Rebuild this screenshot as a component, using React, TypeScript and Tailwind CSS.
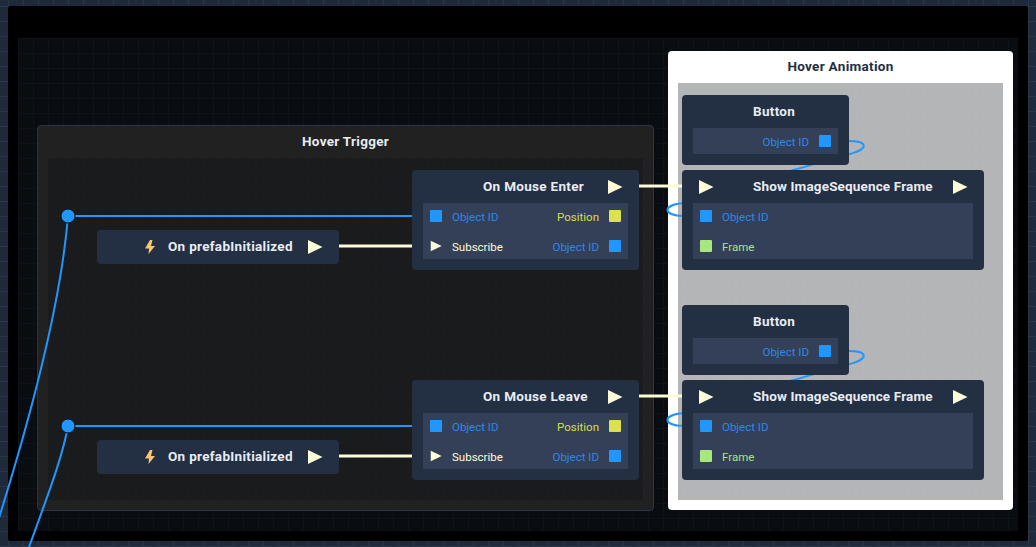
const title = "text-[13.5px] font-bold tracking-[0.3px] text-[#e8ecf2]";
const row = "flex items-center gap-[10px]";
const rowEnd = "flex items-center justify-end gap-[10px]";

function Play({ className }: { className: string }) {
  return (
    <svg viewBox="0 0 16 16" className={className}>
      <path d="M1 1 L15.5 8 L1 15 Z" fill="#fdfbd8" />
    </svg>
  );
}

function Port({ color }: { color: string }) {
  return <span className={`block w-3 h-3 rounded-[1px] ${color}`} />;
}

function Label({ children }: { children: string }) {
  return <span className="translate-y-[2px]">{children}</span>;
}

function Bolt() {
  return (
    <svg viewBox="0 0 12 14" className="w-3 h-3.5">
      <path d="M6 0 L1 8.5 H5 L4.5 14 L11 6 H7 L8.5 0 Z" fill="#fbc66d" />
    </svg>
  );
}

function MouseNode({ top, name }: { top: string; name: string }) {
  return (
    <div className={`absolute left-[412px] w-[227px] h-[100px] rounded-[4px] bg-[#232f42] ${top}`}>
      <div className="h-[33px] flex items-center">
        <span className={`ml-[71px] ${title}`}>{name}</span>
        <Play className="w-4 h-4 ml-auto mr-[16px]" />
      </div>
      <div className="mx-[11px] h-[56px] bg-[#344057] px-[7px]">
        <div className="grid grid-cols-2 auto-rows-[30px] items-center -translate-y-[2px] text-[11.5px]">
          <div className={`${row} text-[#2b88ea]`}><Port color="bg-[#2196fe]" /><Label>Object ID</Label></div>
          <div className={`${rowEnd} text-[#d8df4e]`}><Label>Position</Label><Port color="bg-[#dbe24e]" /></div>
          <div className={`${row} text-[#fdfbd8]`}><Play className="w-3 h-3" /><Label>Subscribe</Label></div>
          <div className={`${rowEnd} text-[#2b88ea]`}><Label>Object ID</Label><Port color="bg-[#2196fe]" /></div>
        </div>
      </div>
    </div>
  );
}

function PrefabNode({ top }: { top: string }) {
  return (
    <div className={`absolute left-[97px] w-[242px] h-[34px] rounded-[4px] bg-[#232f42] flex items-center ${top}`}>
      <div className="ml-[47px] w-3 flex"><Bolt /></div>
      <span className={`ml-[12px] -translate-y-[1px] ${title}`}>On prefabInitialized</span>
      <Play className="w-4 h-4 ml-auto mr-[16px]" />
    </div>
  );
}

function ButtonNode({ top }: { top: string }) {
  return (
    <div className={`absolute left-[682px] w-[167px] h-[70px] rounded-[4px] bg-[#232f42] ${top}`}>
      <div className="h-[33px] flex items-center">
        <span className={`ml-[71px] ${title}`}>Button</span>
      </div>
      <div className={`mx-[11px] h-[26px] bg-[#344057] pr-[7px] text-[11.5px] text-[#2b88ea] ${rowEnd}`}>
        <Label>Object ID</Label><Port color="bg-[#2196fe]" />
      </div>
    </div>
  );
}

function ShowNode({ top }: { top: string }) {
  return (
    <div className={`absolute left-[682px] w-[302px] h-[100px] rounded-[4px] bg-[#232f42] ${top}`}>
      <div className="h-[33px] flex items-center">
        <Play className="w-4 h-4 ml-[16px]" />
        <span className="ml-[39px] text-[13.5px] font-bold tracking-[0.15px] text-[#e8ecf2]">Show ImageSequence Frame</span>
        <Play className="w-4 h-4 ml-auto mr-[16px]" />
      </div>
      <div className="mx-[11px] h-[56px] bg-[#344057] px-[7px]">
        <div className="grid auto-rows-[30px] items-center -translate-y-[2px] text-[11.5px]">
          <div className={`${row} text-[#2b88ea]`}><Port color="bg-[#2196fe]" /><Label>Object ID</Label></div>
          <div className={`${row} text-[#a8e67e]`}><Port color="bg-[#a8e67e]" /><Label>Frame</Label></div>
        </div>
      </div>
    </div>
  );
}

// wires sit between the group panels and the nodes
function Wires() {
  const dy = [0, 210];
  return (
    <svg width="1036" height="547" className="absolute left-0 top-0" fill="none">
      <path d="M68 216 C 62 290 40 390 -8 540" stroke="#2196fe" strokeWidth="2" />
      <path d="M68 426 C 62 460 44 505 28 550" stroke="#2196fe" strokeWidth="2" />
      {dy.map((d) => (
        <g key={d} transform={`translate(0 ${d})`}>
          <path d="M68 216 H414" stroke="#2196fe" strokeWidth="2" />
          <path d="M339 246 H414" stroke="#fdfbd8" strokeWidth="3" />
          <path d="M637 186 H684" stroke="#fdfbd8" strokeWidth="3" />
          <path d="M684 203 C 662 205 662 215 684 216" stroke="#2196fe" strokeWidth="2" />
          <path d="M845 141 C 870 140 870 150 845 155 C 830 159 812 165 790 171" stroke="#2196fe" strokeWidth="2" />
        </g>
      ))}
      <circle cx="68" cy="216" r="7" fill="#2196fe" stroke="#0d1117" strokeWidth="1" />
      <circle cx="68" cy="426" r="7" fill="#2196fe" stroke="#0d1117" strokeWidth="1" />
    </svg>
  );
}

export default function App() {
  return (
    <div className="relative w-[1036px] h-[547px] overflow-hidden bg-[#1e2939] bg-[linear-gradient(#2b3648_1px,transparent_1px),linear-gradient(90deg,#2b3648_1px,transparent_1px)] bg-[size:15px_15px] bg-[position:8px_6px] font-['Roboto',sans-serif]">
      {/* black frame and inner canvas */}
      <div className="absolute left-[8px] top-[6px] w-[1020px] h-[535px] rounded-[2px] bg-black pl-[10px] pr-[10px] pt-[32px] pb-[10px]">
        <div className="w-full h-full bg-[#090c11] bg-[linear-gradient(#0e1319_1px,transparent_1px),linear-gradient(90deg,#0e1319_1px,transparent_1px)] bg-[size:15px_15px]" />
      </div>

      {/* Hover Trigger group */}
      <div className="absolute left-[37px] top-[125px] w-[617px] h-[386px] rounded-[4px] bg-[#212121] border border-[#2b3546] px-[10px] pb-[10px] flex flex-col">
        <div className="h-[32px] flex items-center justify-center">
          <span className={`-translate-y-[1px] ${title}`}>Hover Trigger</span>
        </div>
        <div className="flex-1 bg-[#1a1b1d] bg-[linear-gradient(#1c1d1f_1px,transparent_1px),linear-gradient(90deg,#1c1d1f_1px,transparent_1px)] bg-[size:15px_15px] bg-[position:5px_13px]" />
      </div>

      {/* Hover Animation group */}
      <div className="absolute left-[668px] top-[51px] w-[345px] h-[459px] rounded-[4px] bg-white px-[10px] pb-[10px] flex flex-col">
        <div className="h-[32px] flex items-center justify-center">
          <span className="-translate-y-[1px] text-[13.5px] font-bold tracking-[0.3px] text-[#232f42]">Hover Animation</span>
        </div>
        <div className="flex-1 bg-[#b4b5b7] bg-[linear-gradient(#b6b7b9_1px,transparent_1px),linear-gradient(90deg,#b6b7b9_1px,transparent_1px)] bg-[size:15px_15px] bg-[position:5px_13px]" />
      </div>

      <Wires />

      <PrefabNode top="top-[230px]" />
      <PrefabNode top="top-[440px]" />
      <MouseNode top="top-[170px]" name="On Mouse Enter" />
      <MouseNode top="top-[380px]" name="On Mouse Leave" />
      <ButtonNode top="top-[95px]" />
      <ButtonNode top="top-[305px]" />
      <ShowNode top="top-[170px]" />
      <ShowNode top="top-[380px]" />
    </div>
  );
}
